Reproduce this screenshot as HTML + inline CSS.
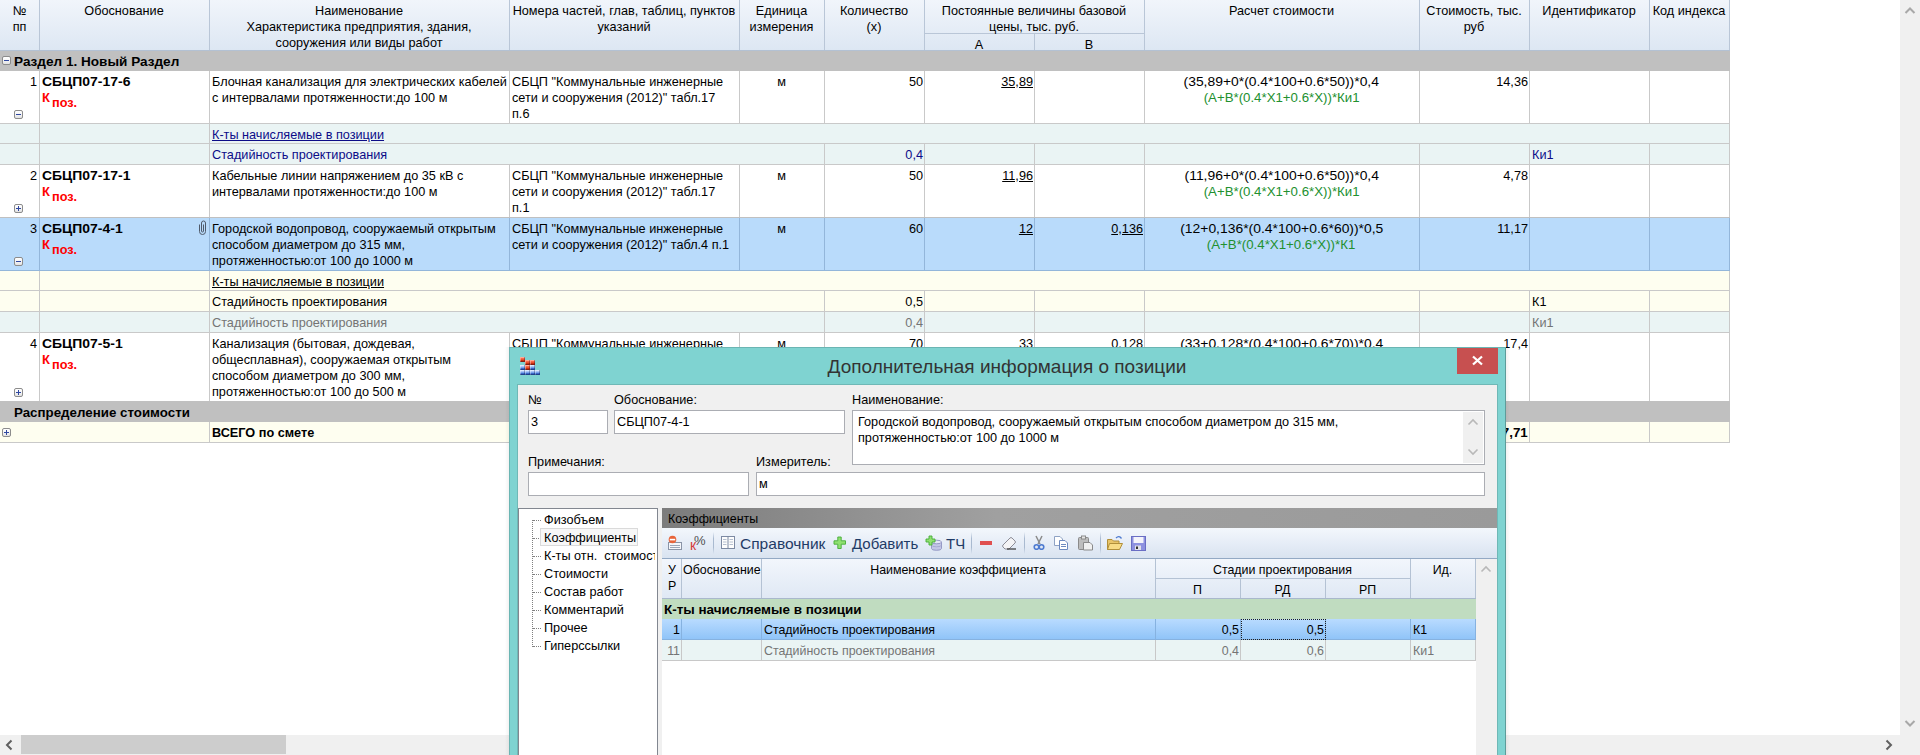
<!DOCTYPE html>
<html><head><meta charset="utf-8"><style>
html,body{margin:0;padding:0;}
body{width:1920px;height:755px;overflow:hidden;position:relative;background:#fff;font-family:"Liberation Sans",sans-serif;}
.t{position:absolute;white-space:pre;font-family:"Liberation Sans",sans-serif;}
.r{position:absolute;}
</style></head><body>
<div class="r" style="left:0px;top:0px;width:1730px;height:50px;background:linear-gradient(#f1f5fb,#dde7f3);"></div>
<div class="r" style="left:0px;top:50px;width:1730px;height:1px;background:#b3c1d3;"></div>
<div class="r" style="left:39px;top:0px;width:1px;height:50px;background:#b9c6d7;"></div>
<div class="r" style="left:209px;top:0px;width:1px;height:50px;background:#b9c6d7;"></div>
<div class="r" style="left:509px;top:0px;width:1px;height:50px;background:#b9c6d7;"></div>
<div class="r" style="left:739px;top:0px;width:1px;height:50px;background:#b9c6d7;"></div>
<div class="r" style="left:824px;top:0px;width:1px;height:50px;background:#b9c6d7;"></div>
<div class="r" style="left:924px;top:0px;width:1px;height:50px;background:#b9c6d7;"></div>
<div class="r" style="left:1034px;top:33px;width:1px;height:17px;background:#b9c6d7;"></div>
<div class="r" style="left:1144px;top:0px;width:1px;height:50px;background:#b9c6d7;"></div>
<div class="r" style="left:1419px;top:0px;width:1px;height:50px;background:#b9c6d7;"></div>
<div class="r" style="left:1529px;top:0px;width:1px;height:50px;background:#b9c6d7;"></div>
<div class="r" style="left:1649px;top:0px;width:1px;height:50px;background:#b9c6d7;"></div>
<div class="r" style="left:1729px;top:0px;width:1px;height:50px;background:#b9c6d7;"></div>
<div class="r" style="left:925px;top:33px;width:219px;height:1px;background:#b9c6d7;"></div>
<div class="t" style="top:2.60px;font-size:12.7px;font-weight:400;color:#000;line-height:16px;left:-980.5px;width:2000px;text-align:center;">№</div>
<div class="t" style="top:18.60px;font-size:12.7px;font-weight:400;color:#000;line-height:16px;left:-980.5px;width:2000px;text-align:center;">пп</div>
<div class="t" style="top:2.60px;font-size:12.7px;font-weight:400;color:#000;line-height:16px;left:-876.0px;width:2000px;text-align:center;">Обоснование</div>
<div class="t" style="top:2.60px;font-size:12.7px;font-weight:400;color:#000;line-height:16px;left:-641.0px;width:2000px;text-align:center;">Наименование</div>
<div class="t" style="top:18.60px;font-size:12.7px;font-weight:400;color:#000;line-height:16px;left:-641.0px;width:2000px;text-align:center;">Характеристика предприятия, здания,</div>
<div class="t" style="top:34.60px;font-size:12.7px;font-weight:400;color:#000;line-height:16px;left:-641.0px;width:2000px;text-align:center;">сооружения или виды работ</div>
<div class="t" style="top:2.60px;font-size:12.7px;font-weight:400;color:#000;line-height:16px;left:-376.0px;width:2000px;text-align:center;">Номера частей, глав, таблиц, пунктов</div>
<div class="t" style="top:18.60px;font-size:12.7px;font-weight:400;color:#000;line-height:16px;left:-376.0px;width:2000px;text-align:center;">указаний</div>
<div class="t" style="top:2.60px;font-size:12.7px;font-weight:400;color:#000;line-height:16px;left:-218.5px;width:2000px;text-align:center;">Единица</div>
<div class="t" style="top:18.60px;font-size:12.7px;font-weight:400;color:#000;line-height:16px;left:-218.5px;width:2000px;text-align:center;">измерения</div>
<div class="t" style="top:2.60px;font-size:12.7px;font-weight:400;color:#000;line-height:16px;left:-126.0px;width:2000px;text-align:center;">Количество</div>
<div class="t" style="top:18.60px;font-size:12.7px;font-weight:400;color:#000;line-height:16px;left:-126.0px;width:2000px;text-align:center;">(x)</div>
<div class="t" style="top:2.60px;font-size:12.7px;font-weight:400;color:#000;line-height:16px;left:34.0px;width:2000px;text-align:center;">Постоянные величины базовой</div>
<div class="t" style="top:18.60px;font-size:12.7px;font-weight:400;color:#000;line-height:16px;left:34.0px;width:2000px;text-align:center;">цены, тыс. руб.</div>
<div class="t" style="top:36.60px;font-size:12.7px;font-weight:400;color:#000;line-height:16px;left:-21px;width:2000px;text-align:center;">А</div>
<div class="t" style="top:36.60px;font-size:12.7px;font-weight:400;color:#000;line-height:16px;left:89px;width:2000px;text-align:center;">В</div>
<div class="t" style="top:2.60px;font-size:12.7px;font-weight:400;color:#000;line-height:16px;left:281.5px;width:2000px;text-align:center;">Расчет стоимости</div>
<div class="t" style="top:2.60px;font-size:12.7px;font-weight:400;color:#000;line-height:16px;left:474.0px;width:2000px;text-align:center;">Стоимость, тыс.</div>
<div class="t" style="top:18.60px;font-size:12.7px;font-weight:400;color:#000;line-height:16px;left:474.0px;width:2000px;text-align:center;">руб</div>
<div class="t" style="top:2.60px;font-size:12.7px;font-weight:400;color:#000;line-height:16px;left:589.0px;width:2000px;text-align:center;">Идентификатор</div>
<div class="t" style="top:2.60px;font-size:12.7px;font-weight:400;color:#000;line-height:16px;left:689.0px;width:2000px;text-align:center;">Код индекса</div>
<div class="r" style="left:0px;top:51px;width:1730px;height:20px;background:#c0c0c0;"></div>
<div class="r" style="left:2px;top:56px;width:7px;height:7px;border:1px solid #8c8c8c;border-radius:2px;background:linear-gradient(#ffffff,#f4f4f4 50%,#e2e2e2)"></div>
<div class="r" style="left:4px;top:60px;width:5px;height:1px;background:#3048a0;"></div>
<div class="t" style="top:53.60px;font-size:12.7px;font-weight:700;color:#000;line-height:16px;left:14px;"><span style="display:inline-block;transform:scaleX(1.07);transform-origin:left">Раздел 1. Новый Раздел</span></div>
<div class="r" style="left:0px;top:70px;width:1730px;height:1px;background:#c0c0c0;"></div>
<div class="r" style="left:0px;top:71px;width:1730px;height:52px;background:#ffffff;"></div>
<div class="r" style="left:39px;top:71px;width:1px;height:52px;background:#c9c9c9;"></div>
<div class="r" style="left:209px;top:71px;width:1px;height:52px;background:#c9c9c9;"></div>
<div class="r" style="left:509px;top:71px;width:1px;height:52px;background:#c9c9c9;"></div>
<div class="r" style="left:739px;top:71px;width:1px;height:52px;background:#c9c9c9;"></div>
<div class="r" style="left:824px;top:71px;width:1px;height:52px;background:#c9c9c9;"></div>
<div class="r" style="left:924px;top:71px;width:1px;height:52px;background:#c9c9c9;"></div>
<div class="r" style="left:1034px;top:71px;width:1px;height:52px;background:#c9c9c9;"></div>
<div class="r" style="left:1144px;top:71px;width:1px;height:52px;background:#c9c9c9;"></div>
<div class="r" style="left:1419px;top:71px;width:1px;height:52px;background:#c9c9c9;"></div>
<div class="r" style="left:1529px;top:71px;width:1px;height:52px;background:#c9c9c9;"></div>
<div class="r" style="left:1649px;top:71px;width:1px;height:52px;background:#c9c9c9;"></div>
<div class="r" style="left:1729px;top:71px;width:1px;height:52px;background:#c9c9c9;"></div>
<div class="t" style="top:73.60px;font-size:12.7px;font-weight:400;color:#000;line-height:16px;left:-1963px;width:2000px;text-align:right;">1</div>
<div class="t" style="top:73.60px;font-size:12.7px;font-weight:700;color:#000;line-height:16px;left:42px;"><span style="display:inline-block;transform:scaleX(1.1);transform-origin:left">СБЦП07-17-6</span></div>
<div class="t" style="top:89.50px;font-size:13px;font-weight:700;color:#ff0000;line-height:16px;left:42px;">К</div>
<div class="t" style="top:94.60px;font-size:12.7px;font-weight:700;color:#ff0000;line-height:16px;left:52px;">поз.</div>
<div class="r" style="left:14px;top:110px;width:7px;height:7px;border:1px solid #8c8c8c;border-radius:2px;background:linear-gradient(#ffffff,#f4f4f4 50%,#e2e2e2)"></div>
<div class="r" style="left:16px;top:114px;width:5px;height:1px;background:#3048a0;"></div>
<div class="t" style="top:73.60px;font-size:12.7px;font-weight:400;color:#000;line-height:16px;left:212px;">Блочная канализация для электрических кабелей</div>
<div class="t" style="top:89.60px;font-size:12.7px;font-weight:400;color:#000;line-height:16px;left:212px;">с интервалами протяженности:до 100 м</div>
<div class="t" style="top:73.60px;font-size:12.7px;font-weight:400;color:#000;line-height:16px;left:512px;">СБЦП &quot;Коммунальные инженерные</div>
<div class="t" style="top:89.60px;font-size:12.7px;font-weight:400;color:#000;line-height:16px;left:512px;">сети и сооружения (2012)&quot; табл.17</div>
<div class="t" style="top:105.60px;font-size:12.7px;font-weight:400;color:#000;line-height:16px;left:512px;">п.6</div>
<div class="t" style="top:73.60px;font-size:12.7px;font-weight:400;color:#000;line-height:16px;left:-218.5px;width:2000px;text-align:center;">м</div>
<div class="t" style="top:73.60px;font-size:12.7px;font-weight:400;color:#000;line-height:16px;left:-1077px;width:2000px;text-align:right;">50</div>
<div class="t" style="top:73.60px;font-size:12.7px;font-weight:400;color:#000;line-height:16px;left:-967px;width:2000px;text-align:right;text-decoration:underline;">35,89</div>
<div class="t" style="top:73.60px;font-size:12.7px;font-weight:400;color:#000;line-height:16px;left:281.5px;width:2000px;text-align:center;"><span style="display:inline-block;transform:scaleX(1.095);transform-origin:center">(35,89+0*(0.4*100+0.6*50))*0,4</span></div>
<div class="t" style="top:89.60px;font-size:12.7px;font-weight:400;color:#22902f;line-height:16px;left:281.5px;width:2000px;text-align:center;"><span style="display:inline-block;transform:scaleX(1.045);transform-origin:center">(A+B*(0.4*X1+0.6*X))*Ки1</span></div>
<div class="t" style="top:73.60px;font-size:12.7px;font-weight:400;color:#000;line-height:16px;left:-472px;width:2000px;text-align:right;">14,36</div>
<div class="r" style="left:0px;top:123px;width:1730px;height:1px;background:#c9c9c9;"></div>
<div class="r" style="left:0px;top:124px;width:1730px;height:19px;background:#eaf4f4;"></div>
<div class="r" style="left:39px;top:124px;width:1px;height:19px;background:#c9c9c9;"></div>
<div class="r" style="left:209px;top:124px;width:1px;height:19px;background:#c9c9c9;"></div>
<div class="r" style="left:1729px;top:124px;width:1px;height:19px;background:#c9c9c9;"></div>
<div class="t" style="top:126.60px;font-size:12.7px;font-weight:400;color:#0c0c88;line-height:16px;left:212px;text-decoration:underline;">К-ты начисляемые в позиции</div>
<div class="r" style="left:0px;top:143px;width:1730px;height:1px;background:#c9c9c9;"></div>
<div class="r" style="left:0px;top:144px;width:1730px;height:20px;background:#eaf4f4;"></div>
<div class="r" style="left:39px;top:144px;width:1px;height:20px;background:#c9c9c9;"></div>
<div class="r" style="left:209px;top:144px;width:1px;height:20px;background:#c9c9c9;"></div>
<div class="r" style="left:824px;top:144px;width:1px;height:20px;background:#c9c9c9;"></div>
<div class="r" style="left:924px;top:144px;width:1px;height:20px;background:#c9c9c9;"></div>
<div class="r" style="left:1034px;top:144px;width:1px;height:20px;background:#c9c9c9;"></div>
<div class="r" style="left:1144px;top:144px;width:1px;height:20px;background:#c9c9c9;"></div>
<div class="r" style="left:1419px;top:144px;width:1px;height:20px;background:#c9c9c9;"></div>
<div class="r" style="left:1529px;top:144px;width:1px;height:20px;background:#c9c9c9;"></div>
<div class="r" style="left:1649px;top:144px;width:1px;height:20px;background:#c9c9c9;"></div>
<div class="r" style="left:1729px;top:144px;width:1px;height:20px;background:#c9c9c9;"></div>
<div class="t" style="top:146.60px;font-size:12.7px;font-weight:400;color:#0c0c88;line-height:16px;left:212px;">Стадийность проектирования</div>
<div class="t" style="top:146.60px;font-size:12.7px;font-weight:400;color:#0c0c88;line-height:16px;left:-1077px;width:2000px;text-align:right;">0,4</div>
<div class="t" style="top:146.60px;font-size:12.7px;font-weight:400;color:#0c0c88;line-height:16px;left:1532px;">Ки1</div>
<div class="r" style="left:0px;top:164px;width:1730px;height:1px;background:#c9c9c9;"></div>
<div class="r" style="left:0px;top:165px;width:1730px;height:52px;background:#ffffff;"></div>
<div class="r" style="left:39px;top:165px;width:1px;height:52px;background:#c9c9c9;"></div>
<div class="r" style="left:209px;top:165px;width:1px;height:52px;background:#c9c9c9;"></div>
<div class="r" style="left:509px;top:165px;width:1px;height:52px;background:#c9c9c9;"></div>
<div class="r" style="left:739px;top:165px;width:1px;height:52px;background:#c9c9c9;"></div>
<div class="r" style="left:824px;top:165px;width:1px;height:52px;background:#c9c9c9;"></div>
<div class="r" style="left:924px;top:165px;width:1px;height:52px;background:#c9c9c9;"></div>
<div class="r" style="left:1034px;top:165px;width:1px;height:52px;background:#c9c9c9;"></div>
<div class="r" style="left:1144px;top:165px;width:1px;height:52px;background:#c9c9c9;"></div>
<div class="r" style="left:1419px;top:165px;width:1px;height:52px;background:#c9c9c9;"></div>
<div class="r" style="left:1529px;top:165px;width:1px;height:52px;background:#c9c9c9;"></div>
<div class="r" style="left:1649px;top:165px;width:1px;height:52px;background:#c9c9c9;"></div>
<div class="r" style="left:1729px;top:165px;width:1px;height:52px;background:#c9c9c9;"></div>
<div class="t" style="top:167.60px;font-size:12.7px;font-weight:400;color:#000;line-height:16px;left:-1963px;width:2000px;text-align:right;">2</div>
<div class="t" style="top:167.60px;font-size:12.7px;font-weight:700;color:#000;line-height:16px;left:42px;"><span style="display:inline-block;transform:scaleX(1.1);transform-origin:left">СБЦП07-17-1</span></div>
<div class="t" style="top:183.50px;font-size:13px;font-weight:700;color:#ff0000;line-height:16px;left:42px;">К</div>
<div class="t" style="top:188.60px;font-size:12.7px;font-weight:700;color:#ff0000;line-height:16px;left:52px;">поз.</div>
<div class="r" style="left:14px;top:204px;width:7px;height:7px;border:1px solid #8c8c8c;border-radius:2px;background:linear-gradient(#ffffff,#f4f4f4 50%,#e2e2e2)"></div>
<div class="r" style="left:16px;top:208px;width:5px;height:1px;background:#3048a0;"></div>
<div class="r" style="left:18px;top:206px;width:1px;height:5px;background:#3048a0;"></div>
<div class="t" style="top:167.60px;font-size:12.7px;font-weight:400;color:#000;line-height:16px;left:212px;">Кабельные линии напряжением до 35 кВ с</div>
<div class="t" style="top:183.60px;font-size:12.7px;font-weight:400;color:#000;line-height:16px;left:212px;">интервалами протяженности:до 100 м</div>
<div class="t" style="top:167.60px;font-size:12.7px;font-weight:400;color:#000;line-height:16px;left:512px;">СБЦП &quot;Коммунальные инженерные</div>
<div class="t" style="top:183.60px;font-size:12.7px;font-weight:400;color:#000;line-height:16px;left:512px;">сети и сооружения (2012)&quot; табл.17</div>
<div class="t" style="top:199.60px;font-size:12.7px;font-weight:400;color:#000;line-height:16px;left:512px;">п.1</div>
<div class="t" style="top:167.60px;font-size:12.7px;font-weight:400;color:#000;line-height:16px;left:-218.5px;width:2000px;text-align:center;">м</div>
<div class="t" style="top:167.60px;font-size:12.7px;font-weight:400;color:#000;line-height:16px;left:-1077px;width:2000px;text-align:right;">50</div>
<div class="t" style="top:167.60px;font-size:12.7px;font-weight:400;color:#000;line-height:16px;left:-967px;width:2000px;text-align:right;text-decoration:underline;">11,96</div>
<div class="t" style="top:167.60px;font-size:12.7px;font-weight:400;color:#000;line-height:16px;left:281.5px;width:2000px;text-align:center;"><span style="display:inline-block;transform:scaleX(1.095);transform-origin:center">(11,96+0*(0.4*100+0.6*50))*0,4</span></div>
<div class="t" style="top:183.60px;font-size:12.7px;font-weight:400;color:#22902f;line-height:16px;left:281.5px;width:2000px;text-align:center;"><span style="display:inline-block;transform:scaleX(1.045);transform-origin:center">(A+B*(0.4*X1+0.6*X))*Ки1</span></div>
<div class="t" style="top:167.60px;font-size:12.7px;font-weight:400;color:#000;line-height:16px;left:-472px;width:2000px;text-align:right;">4,78</div>
<div class="r" style="left:0px;top:217px;width:1730px;height:1px;background:#c0c0c0;"></div>
<div class="r" style="left:0px;top:218px;width:1730px;height:52px;background:#b9dbfb;"></div>
<div class="r" style="left:39px;top:218px;width:1px;height:52px;background:#93b6da;"></div>
<div class="r" style="left:209px;top:218px;width:1px;height:52px;background:#93b6da;"></div>
<div class="r" style="left:509px;top:218px;width:1px;height:52px;background:#93b6da;"></div>
<div class="r" style="left:739px;top:218px;width:1px;height:52px;background:#93b6da;"></div>
<div class="r" style="left:824px;top:218px;width:1px;height:52px;background:#93b6da;"></div>
<div class="r" style="left:924px;top:218px;width:1px;height:52px;background:#93b6da;"></div>
<div class="r" style="left:1034px;top:218px;width:1px;height:52px;background:#93b6da;"></div>
<div class="r" style="left:1144px;top:218px;width:1px;height:52px;background:#93b6da;"></div>
<div class="r" style="left:1419px;top:218px;width:1px;height:52px;background:#93b6da;"></div>
<div class="r" style="left:1529px;top:218px;width:1px;height:52px;background:#93b6da;"></div>
<div class="r" style="left:1649px;top:218px;width:1px;height:52px;background:#93b6da;"></div>
<div class="r" style="left:1729px;top:218px;width:1px;height:52px;background:#93b6da;"></div>
<div class="t" style="top:220.60px;font-size:12.7px;font-weight:400;color:#000;line-height:16px;left:-1963px;width:2000px;text-align:right;">3</div>
<div class="t" style="top:220.60px;font-size:12.7px;font-weight:700;color:#000;line-height:16px;left:42px;"><span style="display:inline-block;transform:scaleX(1.1);transform-origin:left">СБЦП07-4-1</span></div>
<div class="t" style="top:236.50px;font-size:13px;font-weight:700;color:#ff0000;line-height:16px;left:42px;">К</div>
<div class="t" style="top:241.60px;font-size:12.7px;font-weight:700;color:#ff0000;line-height:16px;left:52px;">поз.</div>
<div class="r" style="left:14px;top:257px;width:7px;height:7px;border:1px solid #8c8c8c;border-radius:2px;background:linear-gradient(#ffffff,#f4f4f4 50%,#e2e2e2)"></div>
<div class="r" style="left:16px;top:261px;width:5px;height:1px;background:#3048a0;"></div>
<div class="t" style="top:220.60px;font-size:12.7px;font-weight:400;color:#000;line-height:16px;left:212px;">Городской водопровод, сооружаемый открытым</div>
<div class="t" style="top:236.60px;font-size:12.7px;font-weight:400;color:#000;line-height:16px;left:212px;">способом диаметром до 315 мм,</div>
<div class="t" style="top:252.60px;font-size:12.7px;font-weight:400;color:#000;line-height:16px;left:212px;">протяженностью:от 100 до 1000 м</div>
<div class="t" style="top:220.60px;font-size:12.7px;font-weight:400;color:#000;line-height:16px;left:512px;">СБЦП &quot;Коммунальные инженерные</div>
<div class="t" style="top:236.60px;font-size:12.7px;font-weight:400;color:#000;line-height:16px;left:512px;">сети и сооружения (2012)&quot; табл.4 п.1</div>
<div class="t" style="top:220.60px;font-size:12.7px;font-weight:400;color:#000;line-height:16px;left:-218.5px;width:2000px;text-align:center;">м</div>
<div class="t" style="top:220.60px;font-size:12.7px;font-weight:400;color:#000;line-height:16px;left:-1077px;width:2000px;text-align:right;">60</div>
<div class="t" style="top:220.60px;font-size:12.7px;font-weight:400;color:#000;line-height:16px;left:-967px;width:2000px;text-align:right;text-decoration:underline;">12</div>
<div class="t" style="top:220.60px;font-size:12.7px;font-weight:400;color:#000;line-height:16px;left:-857px;width:2000px;text-align:right;text-decoration:underline;">0,136</div>
<div class="t" style="top:220.60px;font-size:12.7px;font-weight:400;color:#000;line-height:16px;left:281.5px;width:2000px;text-align:center;"><span style="display:inline-block;transform:scaleX(1.095);transform-origin:center">(12+0,136*(0.4*100+0.6*60))*0,5</span></div>
<div class="t" style="top:236.60px;font-size:12.7px;font-weight:400;color:#22902f;line-height:16px;left:281.5px;width:2000px;text-align:center;"><span style="display:inline-block;transform:scaleX(1.045);transform-origin:center">(A+B*(0.4*X1+0.6*X))*К1</span></div>
<div class="t" style="top:220.60px;font-size:12.7px;font-weight:400;color:#000;line-height:16px;left:-472px;width:2000px;text-align:right;">11,17</div>
<div class="r" style="left:0px;top:270px;width:1730px;height:1px;background:#93b6da;"></div>
<svg class="r" style="left:197px;top:219px" width="11" height="17" viewBox="0 0 11 17"><path d="M2.5 5.5 V12.5 A3 3 0 0 0 8.5 12.5 V4 A2 2 0 0 0 4.5 4 V12 A1 1 0 0 0 6.5 12 V5.5" fill="none" stroke="#4f5a6a" stroke-width="1"/></svg>
<div class="r" style="left:0px;top:271px;width:1730px;height:19px;background:#fefef0;"></div>
<div class="r" style="left:39px;top:271px;width:1px;height:19px;background:#c9c9c9;"></div>
<div class="r" style="left:209px;top:271px;width:1px;height:19px;background:#c9c9c9;"></div>
<div class="r" style="left:1729px;top:271px;width:1px;height:19px;background:#c9c9c9;"></div>
<div class="t" style="top:273.60px;font-size:12.7px;font-weight:400;color:#000;line-height:16px;left:212px;text-decoration:underline;">К-ты начисляемые в позиции</div>
<div class="r" style="left:0px;top:290px;width:1730px;height:1px;background:#c9c9c9;"></div>
<div class="r" style="left:0px;top:291px;width:1730px;height:20px;background:#fefef0;"></div>
<div class="r" style="left:39px;top:291px;width:1px;height:20px;background:#c9c9c9;"></div>
<div class="r" style="left:209px;top:291px;width:1px;height:20px;background:#c9c9c9;"></div>
<div class="r" style="left:824px;top:291px;width:1px;height:20px;background:#c9c9c9;"></div>
<div class="r" style="left:924px;top:291px;width:1px;height:20px;background:#c9c9c9;"></div>
<div class="r" style="left:1034px;top:291px;width:1px;height:20px;background:#c9c9c9;"></div>
<div class="r" style="left:1144px;top:291px;width:1px;height:20px;background:#c9c9c9;"></div>
<div class="r" style="left:1419px;top:291px;width:1px;height:20px;background:#c9c9c9;"></div>
<div class="r" style="left:1529px;top:291px;width:1px;height:20px;background:#c9c9c9;"></div>
<div class="r" style="left:1649px;top:291px;width:1px;height:20px;background:#c9c9c9;"></div>
<div class="r" style="left:1729px;top:291px;width:1px;height:20px;background:#c9c9c9;"></div>
<div class="t" style="top:293.60px;font-size:12.7px;font-weight:400;color:#000;line-height:16px;left:212px;">Стадийность проектирования</div>
<div class="t" style="top:293.60px;font-size:12.7px;font-weight:400;color:#000;line-height:16px;left:-1077px;width:2000px;text-align:right;">0,5</div>
<div class="t" style="top:293.60px;font-size:12.7px;font-weight:400;color:#000;line-height:16px;left:1532px;">К1</div>
<div class="r" style="left:0px;top:311px;width:1730px;height:1px;background:#c9c9c9;"></div>
<div class="r" style="left:0px;top:312px;width:1730px;height:20px;background:#eaf4f4;"></div>
<div class="r" style="left:39px;top:312px;width:1px;height:20px;background:#c9c9c9;"></div>
<div class="r" style="left:209px;top:312px;width:1px;height:20px;background:#c9c9c9;"></div>
<div class="r" style="left:824px;top:312px;width:1px;height:20px;background:#c9c9c9;"></div>
<div class="r" style="left:924px;top:312px;width:1px;height:20px;background:#c9c9c9;"></div>
<div class="r" style="left:1034px;top:312px;width:1px;height:20px;background:#c9c9c9;"></div>
<div class="r" style="left:1144px;top:312px;width:1px;height:20px;background:#c9c9c9;"></div>
<div class="r" style="left:1419px;top:312px;width:1px;height:20px;background:#c9c9c9;"></div>
<div class="r" style="left:1529px;top:312px;width:1px;height:20px;background:#c9c9c9;"></div>
<div class="r" style="left:1649px;top:312px;width:1px;height:20px;background:#c9c9c9;"></div>
<div class="r" style="left:1729px;top:312px;width:1px;height:20px;background:#c9c9c9;"></div>
<div class="t" style="top:314.60px;font-size:12.7px;font-weight:400;color:#747474;line-height:16px;left:212px;">Стадийность проектирования</div>
<div class="t" style="top:314.60px;font-size:12.7px;font-weight:400;color:#747474;line-height:16px;left:-1077px;width:2000px;text-align:right;">0,4</div>
<div class="t" style="top:314.60px;font-size:12.7px;font-weight:400;color:#747474;line-height:16px;left:1532px;">Ки1</div>
<div class="r" style="left:0px;top:332px;width:1730px;height:1px;background:#c9c9c9;"></div>
<div class="r" style="left:0px;top:333px;width:1730px;height:68px;background:#ffffff;"></div>
<div class="r" style="left:39px;top:333px;width:1px;height:68px;background:#c9c9c9;"></div>
<div class="r" style="left:209px;top:333px;width:1px;height:68px;background:#c9c9c9;"></div>
<div class="r" style="left:509px;top:333px;width:1px;height:68px;background:#c9c9c9;"></div>
<div class="r" style="left:739px;top:333px;width:1px;height:68px;background:#c9c9c9;"></div>
<div class="r" style="left:824px;top:333px;width:1px;height:68px;background:#c9c9c9;"></div>
<div class="r" style="left:924px;top:333px;width:1px;height:68px;background:#c9c9c9;"></div>
<div class="r" style="left:1034px;top:333px;width:1px;height:68px;background:#c9c9c9;"></div>
<div class="r" style="left:1144px;top:333px;width:1px;height:68px;background:#c9c9c9;"></div>
<div class="r" style="left:1419px;top:333px;width:1px;height:68px;background:#c9c9c9;"></div>
<div class="r" style="left:1529px;top:333px;width:1px;height:68px;background:#c9c9c9;"></div>
<div class="r" style="left:1649px;top:333px;width:1px;height:68px;background:#c9c9c9;"></div>
<div class="r" style="left:1729px;top:333px;width:1px;height:68px;background:#c9c9c9;"></div>
<div class="t" style="top:335.60px;font-size:12.7px;font-weight:400;color:#000;line-height:16px;left:-1963px;width:2000px;text-align:right;">4</div>
<div class="t" style="top:335.60px;font-size:12.7px;font-weight:700;color:#000;line-height:16px;left:42px;"><span style="display:inline-block;transform:scaleX(1.1);transform-origin:left">СБЦП07-5-1</span></div>
<div class="t" style="top:351.50px;font-size:13px;font-weight:700;color:#ff0000;line-height:16px;left:42px;">К</div>
<div class="t" style="top:356.60px;font-size:12.7px;font-weight:700;color:#ff0000;line-height:16px;left:52px;">поз.</div>
<div class="r" style="left:14px;top:388px;width:7px;height:7px;border:1px solid #8c8c8c;border-radius:2px;background:linear-gradient(#ffffff,#f4f4f4 50%,#e2e2e2)"></div>
<div class="r" style="left:16px;top:392px;width:5px;height:1px;background:#3048a0;"></div>
<div class="r" style="left:18px;top:390px;width:1px;height:5px;background:#3048a0;"></div>
<div class="t" style="top:335.60px;font-size:12.7px;font-weight:400;color:#000;line-height:16px;left:212px;">Канализация (бытовая, дождевая,</div>
<div class="t" style="top:351.60px;font-size:12.7px;font-weight:400;color:#000;line-height:16px;left:212px;">общесплавная), сооружаемая открытым</div>
<div class="t" style="top:367.60px;font-size:12.7px;font-weight:400;color:#000;line-height:16px;left:212px;">способом диаметром до 300 мм,</div>
<div class="t" style="top:383.60px;font-size:12.7px;font-weight:400;color:#000;line-height:16px;left:212px;">протяженностью:от 100 до 500 м</div>
<div class="t" style="top:335.60px;font-size:12.7px;font-weight:400;color:#000;line-height:16px;left:512px;">СБЦП &quot;Коммунальные инженерные</div>
<div class="t" style="top:351.60px;font-size:12.7px;font-weight:400;color:#000;line-height:16px;left:512px;">сети и сооружения (2012)&quot; табл.5</div>
<div class="t" style="top:367.60px;font-size:12.7px;font-weight:400;color:#000;line-height:16px;left:512px;">п.1</div>
<div class="t" style="top:335.60px;font-size:12.7px;font-weight:400;color:#000;line-height:16px;left:-218.5px;width:2000px;text-align:center;">м</div>
<div class="t" style="top:335.60px;font-size:12.7px;font-weight:400;color:#000;line-height:16px;left:-1077px;width:2000px;text-align:right;">70</div>
<div class="t" style="top:335.60px;font-size:12.7px;font-weight:400;color:#000;line-height:16px;left:-967px;width:2000px;text-align:right;text-decoration:underline;">33</div>
<div class="t" style="top:335.60px;font-size:12.7px;font-weight:400;color:#000;line-height:16px;left:-857px;width:2000px;text-align:right;text-decoration:underline;">0,128</div>
<div class="t" style="top:335.60px;font-size:12.7px;font-weight:400;color:#000;line-height:16px;left:281.5px;width:2000px;text-align:center;"><span style="display:inline-block;transform:scaleX(1.095);transform-origin:center">(33+0,128*(0.4*100+0.6*70))*0,4</span></div>
<div class="t" style="top:351.60px;font-size:12.7px;font-weight:400;color:#22902f;line-height:16px;left:281.5px;width:2000px;text-align:center;"><span style="display:inline-block;transform:scaleX(1.045);transform-origin:center">(A+B*(0.4*X1+0.6*X))*Ки1</span></div>
<div class="t" style="top:335.60px;font-size:12.7px;font-weight:400;color:#000;line-height:16px;left:-472px;width:2000px;text-align:right;">17,4</div>
<div class="r" style="left:0px;top:401px;width:1730px;height:21px;background:#c0c0c0;"></div>
<div class="t" style="top:404.60px;font-size:12.7px;font-weight:700;color:#000;line-height:16px;left:14px;"><span style="display:inline-block;transform:scaleX(1.05);transform-origin:left">Распределение стоимости</span></div>
<div class="r" style="left:0px;top:422px;width:1730px;height:20px;background:#fefef0;"></div>
<div class="r" style="left:209px;top:422px;width:1px;height:20px;background:#c9c9c9;"></div>
<div class="r" style="left:1419px;top:422px;width:1px;height:20px;background:#c9c9c9;"></div>
<div class="r" style="left:1529px;top:422px;width:1px;height:20px;background:#c9c9c9;"></div>
<div class="r" style="left:1649px;top:422px;width:1px;height:20px;background:#c9c9c9;"></div>
<div class="r" style="left:1729px;top:422px;width:1px;height:20px;background:#c9c9c9;"></div>
<div class="r" style="left:2px;top:428px;width:7px;height:7px;border:1px solid #8c8c8c;border-radius:2px;background:linear-gradient(#ffffff,#f4f4f4 50%,#e2e2e2)"></div>
<div class="r" style="left:4px;top:432px;width:5px;height:1px;background:#3048a0;"></div>
<div class="r" style="left:6px;top:430px;width:1px;height:5px;background:#3048a0;"></div>
<div class="t" style="top:424.60px;font-size:12.7px;font-weight:700;color:#000;line-height:16px;left:212px;"><span style="display:inline-block;transform:scaleX(1.0);transform-origin:left">ВСЕГО по смете</span></div>
<div class="t" style="top:424.60px;font-size:12.7px;font-weight:700;color:#000;line-height:16px;left:-472px;width:2000px;text-align:right;"><span style="display:inline-block;transform:scaleX(1.05);transform-origin:right">47,71</span></div>
<div class="r" style="left:0px;top:442px;width:1730px;height:1px;background:#c9c9c9;"></div>
<div class="r" style="left:1900px;top:0px;width:20px;height:755px;background:#f0f0f0;"></div>
<div class="r" style="left:0px;top:735px;width:1900px;height:20px;background:#f0f0f0;"></div>
<div class="r" style="left:21px;top:735px;width:265px;height:19px;background:#cdcdcd;"></div>
<svg class="r" style="left:1904px;top:5px" width="12" height="10" viewBox="0 0 12 10"><path d="M1.5 8 L6 3.5 L10.5 8" fill="none" stroke="#a8a8a8" stroke-width="2"/></svg>
<svg class="r" style="left:1904px;top:719px" width="12" height="10" viewBox="0 0 12 10"><path d="M1.5 2 L6 6.5 L10.5 2" fill="none" stroke="#a8a8a8" stroke-width="2"/></svg>
<svg class="r" style="left:4px;top:739px" width="10" height="12" viewBox="0 0 10 12"><path d="M7.5 1.5 L3 6 L7.5 10.5" fill="none" stroke="#606060" stroke-width="2"/></svg>
<svg class="r" style="left:1884px;top:739px" width="10" height="12" viewBox="0 0 10 12"><path d="M2.5 1.5 L7 6 L2.5 10.5" fill="none" stroke="#606060" stroke-width="2"/></svg>
<div class="r" style="left:505px;top:347px;width:4px;height:408px;background:linear-gradient(90deg,rgba(0,0,0,0),rgba(0,0,0,0.05));"></div>
<div class="r" style="left:1506px;top:347px;width:4px;height:408px;background:linear-gradient(90deg,rgba(0,0,0,0.05),rgba(0,0,0,0));"></div>
<div class="r" style="left:509px;top:347px;width:997px;height:408px;background:#7fd3d1;box-shadow:inset 1px 1px 0 #6bb5b3, inset -1px 0 0 #5d9c9a;"></div>
<div class="r" style="left:520px;top:357px;width:5px;height:5px;background:linear-gradient(#ff8a6a,#f25a3a 45%,#c8300f 70%,#b02508);box-shadow:inset -1px -1px 0 rgba(0,0,40,0.28), inset 1px 1px 0 rgba(255,255,255,0.35);"></div>
<div class="r" style="left:525px;top:360px;width:5px;height:5px;background:linear-gradient(#ff8a6a,#f25a3a 45%,#c8300f 70%,#b02508);box-shadow:inset -1px -1px 0 rgba(0,0,40,0.28), inset 1px 1px 0 rgba(255,255,255,0.35);"></div>
<div class="r" style="left:530px;top:360px;width:5px;height:5px;background:linear-gradient(#ff8a6a,#f25a3a 45%,#c8300f 70%,#b02508);box-shadow:inset -1px -1px 0 rgba(0,0,40,0.28), inset 1px 1px 0 rgba(255,255,255,0.35);"></div>
<div class="r" style="left:520px;top:365px;width:5px;height:5px;background:linear-gradient(#dbe8ff,#8fb4f5 45%,#3f6fcf 65%,#2a52a8);box-shadow:inset -1px -1px 0 rgba(0,0,40,0.28), inset 1px 1px 0 rgba(255,255,255,0.35);"></div>
<div class="r" style="left:525px;top:365px;width:5px;height:5px;background:linear-gradient(#ff8a6a,#f25a3a 45%,#c8300f 70%,#b02508);box-shadow:inset -1px -1px 0 rgba(0,0,40,0.28), inset 1px 1px 0 rgba(255,255,255,0.35);"></div>
<div class="r" style="left:530px;top:365px;width:5px;height:5px;background:linear-gradient(#dbe8ff,#8fb4f5 45%,#3f6fcf 65%,#2a52a8);box-shadow:inset -1px -1px 0 rgba(0,0,40,0.28), inset 1px 1px 0 rgba(255,255,255,0.35);"></div>
<div class="r" style="left:520px;top:370px;width:5px;height:5px;background:linear-gradient(#dbe8ff,#8fb4f5 45%,#3f6fcf 65%,#2a52a8);box-shadow:inset -1px -1px 0 rgba(0,0,40,0.28), inset 1px 1px 0 rgba(255,255,255,0.35);"></div>
<div class="r" style="left:525px;top:370px;width:5px;height:5px;background:linear-gradient(#dbe8ff,#8fb4f5 45%,#3f6fcf 65%,#2a52a8);box-shadow:inset -1px -1px 0 rgba(0,0,40,0.28), inset 1px 1px 0 rgba(255,255,255,0.35);"></div>
<div class="r" style="left:530px;top:370px;width:5px;height:5px;background:linear-gradient(#dbe8ff,#8fb4f5 45%,#3f6fcf 65%,#2a52a8);box-shadow:inset -1px -1px 0 rgba(0,0,40,0.28), inset 1px 1px 0 rgba(255,255,255,0.35);"></div>
<div class="r" style="left:535px;top:370px;width:5px;height:5px;background:linear-gradient(#dbe8ff,#8fb4f5 45%,#3f6fcf 65%,#2a52a8);box-shadow:inset -1px -1px 0 rgba(0,0,40,0.28), inset 1px 1px 0 rgba(255,255,255,0.35);"></div>
<div class="t" style="top:359.42px;font-size:19px;font-weight:400;color:#333333;line-height:16px;left:7px;width:2000px;text-align:center;">Дополнительная информация о позиции</div>
<div class="r" style="left:1457px;top:348px;width:41px;height:26px;background:#c75050;"></div>
<svg class="r" style="left:1471px;top:355px" width="13" height="11" viewBox="0 0 13 11"><path d="M2 1.5 L11 9.5 M11 1.5 L2 9.5" stroke="#ffffff" stroke-width="2.3"/></svg>
<div class="r" style="left:517px;top:384px;width:981px;height:371px;background:#6fb8b6;"></div>
<div class="r" style="left:518px;top:385px;width:979px;height:370px;background:#f0f0f0;"></div>
<div class="t" style="top:391.60px;font-size:12.7px;font-weight:400;color:#000;line-height:16px;left:528px;">№</div>
<div class="t" style="top:391.60px;font-size:12.7px;font-weight:400;color:#000;line-height:16px;left:614px;">Обоснование:</div>
<div class="t" style="top:391.60px;font-size:12.7px;font-weight:400;color:#000;line-height:16px;left:852px;">Наименование:</div>
<div class="r" style="left:528px;top:410px;width:78px;height:22px;background:#fff;border:1px solid #abadb3"></div>
<div class="t" style="top:413.60px;font-size:12.7px;font-weight:400;color:#000;line-height:16px;left:531px;">3</div>
<div class="r" style="left:614px;top:410px;width:229px;height:22px;background:#fff;border:1px solid #abadb3"></div>
<div class="t" style="top:413.60px;font-size:12.7px;font-weight:400;color:#000;line-height:16px;left:617px;">СБЦП07-4-1</div>
<div class="r" style="left:852px;top:410px;width:631px;height:53px;background:#fff;border:1px solid #abadb3"></div>
<div class="r" style="left:1463px;top:412px;width:20px;height:51px;background:#f0f0f0;"></div>
<svg class="r" style="left:1467px;top:417px" width="12" height="10" viewBox="0 0 12 10"><path d="M1.5 7.5 L6 3 L10.5 7.5" fill="none" stroke="#b8b8b8" stroke-width="1.6"/></svg>
<svg class="r" style="left:1467px;top:447px" width="12" height="10" viewBox="0 0 12 10"><path d="M1.5 2.5 L6 7 L10.5 2.5" fill="none" stroke="#b8b8b8" stroke-width="1.6"/></svg>
<div class="t" style="top:413.60px;font-size:12.7px;font-weight:400;color:#000;line-height:16px;left:858px;">Городской водопровод, сооружаемый открытым способом диаметром до 315 мм,</div>
<div class="t" style="top:429.60px;font-size:12.7px;font-weight:400;color:#000;line-height:16px;left:858px;">протяженностью:от 100 до 1000 м</div>
<div class="t" style="top:453.60px;font-size:12.7px;font-weight:400;color:#000;line-height:16px;left:528px;">Примечания:</div>
<div class="t" style="top:453.60px;font-size:12.7px;font-weight:400;color:#000;line-height:16px;left:756px;">Измеритель:</div>
<div class="r" style="left:528px;top:472px;width:219px;height:22px;background:#fff;border:1px solid #abadb3"></div>
<div class="r" style="left:756px;top:472px;width:727px;height:22px;background:#fff;border:1px solid #abadb3"></div>
<div class="t" style="top:475.60px;font-size:12.7px;font-weight:400;color:#000;line-height:16px;left:759px;">м</div>
<div class="r" style="left:518px;top:508px;width:138px;height:260px;background:#fff;border:1px solid #828790"></div>
<div class="r" style="left:532px;top:520px;width:0;height:127px;border-left:1px dotted #808080"></div>
<div class="r" style="left:533px;top:520px;width:8px;height:0;border-top:1px dotted #808080"></div>
<div class="r" style="left:533px;top:538px;width:8px;height:0;border-top:1px dotted #808080"></div>
<div class="r" style="left:533px;top:556px;width:8px;height:0;border-top:1px dotted #808080"></div>
<div class="r" style="left:533px;top:574px;width:8px;height:0;border-top:1px dotted #808080"></div>
<div class="r" style="left:533px;top:592px;width:8px;height:0;border-top:1px dotted #808080"></div>
<div class="r" style="left:533px;top:610px;width:8px;height:0;border-top:1px dotted #808080"></div>
<div class="r" style="left:533px;top:628px;width:8px;height:0;border-top:1px dotted #808080"></div>
<div class="r" style="left:533px;top:646px;width:8px;height:0;border-top:1px dotted #808080"></div>
<div class="r" style="left:540px;top:528px;width:96px;height:16px;background:#f7f7f7;border:1px solid #dadada"></div>
<div class="t" style="top:511.60px;font-size:12.7px;font-weight:400;color:#000;line-height:16px;left:544px;">Физобъем</div>
<div class="t" style="top:529.60px;font-size:12.7px;font-weight:400;color:#000;line-height:16px;left:544px;">Коэффициенты</div>
<div class="t" style="top:547.60px;font-size:12.7px;font-weight:400;color:#000;line-height:16px;left:544px;overflow:hidden;width:111px;">К-ты отн.  стоимость</div>
<div class="t" style="top:565.60px;font-size:12.7px;font-weight:400;color:#000;line-height:16px;left:544px;">Стоимости</div>
<div class="t" style="top:583.60px;font-size:12.7px;font-weight:400;color:#000;line-height:16px;left:544px;">Состав работ</div>
<div class="t" style="top:601.60px;font-size:12.7px;font-weight:400;color:#000;line-height:16px;left:544px;">Комментарий</div>
<div class="t" style="top:619.60px;font-size:12.7px;font-weight:400;color:#000;line-height:16px;left:544px;">Прочее</div>
<div class="t" style="top:637.60px;font-size:12.7px;font-weight:400;color:#000;line-height:16px;left:544px;">Гиперссылки</div>
<div class="r" style="left:662px;top:508px;width:835px;height:20px;background:linear-gradient(90deg,#7c7c7c,#a0a0a0 40%,#9a9a9a);"></div>
<div class="t" style="top:510.70px;font-size:12.4px;font-weight:400;color:#000;line-height:16px;left:668px;">Коэффициенты</div>
<div class="r" style="left:662px;top:528px;width:835px;height:30px;background:linear-gradient(#f3f7fc,#e6edf7 50%,#d9e3f0);"></div>
<div class="r" style="left:662px;top:558px;width:835px;height:1px;background:#93a9c4;"></div>
<div class="r" style="left:713px;top:532px;width:1px;height:22px;background:linear-gradient(rgba(160,180,205,0),#a9bad0 30%,#a9bad0 70%,rgba(160,180,205,0));"></div>
<div class="r" style="left:971px;top:532px;width:1px;height:22px;background:linear-gradient(rgba(160,180,205,0),#a9bad0 30%,#a9bad0 70%,rgba(160,180,205,0));"></div>
<div class="r" style="left:1024px;top:532px;width:1px;height:22px;background:linear-gradient(rgba(160,180,205,0),#a9bad0 30%,#a9bad0 70%,rgba(160,180,205,0));"></div>
<div class="r" style="left:1100px;top:532px;width:1px;height:22px;background:linear-gradient(rgba(160,180,205,0),#a9bad0 30%,#a9bad0 70%,rgba(160,180,205,0));"></div>
<svg class="r" style="left:667px;top:535px" width="16" height="16" viewBox="0 0 16 16">
<rect x="1.5" y="7.5" width="13" height="7" fill="#f4f6fa" stroke="#8a94a6"/><line x1="3" y1="10.5" x2="13" y2="10.5" stroke="#9aa6b8"/><line x1="3" y1="12.5" x2="13" y2="12.5" stroke="#9aa6b8"/>
<circle cx="5.5" cy="4.5" r="3.8" fill="#e8643a"/><rect x="2.8" y="3.8" width="5.4" height="1.6" fill="#fff"/></svg>
<div class="t" style="top:537.15px;font-size:14px;font-weight:400;color:#d43a3a;line-height:16px;left:690px;">к</div>
<div class="t" style="top:532.50px;font-size:13px;font-weight:400;color:#505050;line-height:16px;left:694px;">%</div>
<svg class="r" style="left:720px;top:535px" width="16" height="15" viewBox="0 0 16 15">
<rect x="1.5" y="1.5" width="13" height="12" fill="#fdfdfd" stroke="#7d8aa3"/><line x1="8" y1="1.5" x2="8" y2="13.5" stroke="#7d8aa3"/>
<line x1="3" y1="4.5" x2="6.5" y2="4.5" stroke="#b5bfcf"/><line x1="3" y1="7" x2="6.5" y2="7" stroke="#b5bfcf"/><line x1="3" y1="9.5" x2="6.5" y2="9.5" stroke="#b5bfcf"/>
<line x1="9.5" y1="4.5" x2="13" y2="4.5" stroke="#b5bfcf"/><line x1="9.5" y1="7" x2="13" y2="7" stroke="#b5bfcf"/><line x1="9.5" y1="9.5" x2="13" y2="9.5" stroke="#b5bfcf"/></svg>
<div class="t" style="top:535.80px;font-size:15px;font-weight:400;color:#1f3b66;line-height:16px;left:740px;"><span style="display:inline-block;transform:scaleX(1.035);transform-origin:left">Справочник</span></div>
<svg class="r" style="left:833px;top:536px" width="14" height="14" viewBox="0 0 14 14">
<path d="M4.8 1 H8.2 V4.8 H12.5 V8.2 H8.2 V12.5 H4.8 V8.2 H1 V4.8 H4.8 Z" fill="#8fe070" stroke="#45ad35" stroke-width="0.9"/></svg>
<div class="t" style="top:535.80px;font-size:15px;font-weight:400;color:#1f3b66;line-height:16px;left:852px;">Добавить</div>
<svg class="r" style="left:925px;top:535px" width="18" height="16" viewBox="0 0 18 16">
<path d="M6.5 7 V13.5 A5 1.8 0 0 0 16.5 13.5 V7" fill="#c3c6e6" stroke="#8d92bf" stroke-width="0.9"/>
<ellipse cx="11.5" cy="7" rx="5" ry="1.8" fill="#e4e6f6" stroke="#8d92bf" stroke-width="0.9"/>
<path d="M6.5 10 A5 1.8 0 0 0 16.5 10" fill="none" stroke="#9ea2cc" stroke-width="0.8"/>
<path d="M4 1 H7 V4 H10 V7 H7 V10 H4 V7 H1 V4 H4 Z" fill="#8fe070" stroke="#45ad35" stroke-width="0.9"/></svg>
<div class="t" style="top:535.80px;font-size:15px;font-weight:400;color:#1f3b66;line-height:16px;left:946px;">ТЧ</div>
<div class="r" style="left:980px;top:541px;width:12px;height:4px;background:#e05050;"></div>
<svg class="r" style="left:1001px;top:536px" width="16" height="14" viewBox="0 0 16 14">
<path d="M2 9 L9 2 Q10 1 11 2 L14 5 Q15 6 14 7 L8 13 H4 L2 11 Q1 10 2 9 Z" fill="#f4f4f6" stroke="#8c8c96"/><line x1="6" y1="13" x2="15" y2="13" stroke="#333" stroke-width="1.2"/></svg>
<svg class="r" style="left:1033px;top:535px" width="12" height="15" viewBox="0 0 12 15">
<path d="M3 1 L7 9 M9 1 L5 9" stroke="#8a8a8a" stroke-width="1.5"/><circle cx="3.5" cy="12" r="2.3" fill="none" stroke="#4d7ad0" stroke-width="1.6"/><circle cx="8.5" cy="12" r="2.3" fill="none" stroke="#4d7ad0" stroke-width="1.6"/></svg>
<svg class="r" style="left:1053px;top:535px" width="16" height="15" viewBox="0 0 16 15">
<path d="M1.5 1.5 H7 L9.5 4 V10.5 H1.5 Z" fill="#fff" stroke="#8ea2c4"/><path d="M6.5 5.5 H12 L14.5 8 V14.5 H6.5 Z" fill="#fff" stroke="#6d8ac0"/>
<line x1="8" y1="9.5" x2="13" y2="9.5" stroke="#6d8ac0"/><line x1="8" y1="11.5" x2="13" y2="11.5" stroke="#6d8ac0"/></svg>
<svg class="r" style="left:1077px;top:535px" width="17" height="16" viewBox="0 0 17 16">
<rect x="1.5" y="2.5" width="10" height="12" rx="1" fill="#bdbdbd" stroke="#8a8a8a"/><rect x="4.5" y="1" width="4" height="3" fill="#e6e6e6" stroke="#8a8a8a"/>
<path d="M6.5 7.5 H13 L15.5 10 V15 H6.5 Z" fill="#f0f0f0" stroke="#8a8a8a"/></svg>
<svg class="r" style="left:1106px;top:535px" width="18" height="16" viewBox="0 0 18 16">
<path d="M1.5 4.5 H6 L7.5 6 H13 V14.5 H1.5 Z" fill="#e9c56a" stroke="#b18f3a"/><path d="M3.5 8.5 H16.5 L13.5 14.5 H1.5 Z" fill="#f8dc86" stroke="#b18f3a"/>
<path d="M10 3 Q13 0 15.5 3.5" fill="none" stroke="#4d7ad0" stroke-width="1.3"/></svg>
<svg class="r" style="left:1131px;top:536px" width="15" height="15" viewBox="0 0 15 15">
<rect x="0.5" y="0.5" width="14" height="14" fill="#8d91e0" stroke="#6a6ec4"/><rect x="2.5" y="1" width="10" height="6" fill="#f4f4fb"/><rect x="4" y="9.5" width="6" height="4.5" fill="#e0e0ea"/><rect x="5" y="10.5" width="2" height="2.5" fill="#333"/></svg>
<div class="r" style="left:662px;top:559px;width:814px;height:40px;background:linear-gradient(#f2f6fc,#dfe8f4);"></div>
<div class="r" style="left:681px;top:559px;width:1px;height:40px;background:#b4c2d4;"></div>
<div class="r" style="left:761px;top:559px;width:1px;height:40px;background:#b4c2d4;"></div>
<div class="r" style="left:1155px;top:559px;width:1px;height:40px;background:#b4c2d4;"></div>
<div class="r" style="left:1410px;top:559px;width:1px;height:40px;background:#b4c2d4;"></div>
<div class="r" style="left:1240px;top:578px;width:1px;height:21px;background:#b4c2d4;"></div>
<div class="r" style="left:1325px;top:578px;width:1px;height:21px;background:#b4c2d4;"></div>
<div class="r" style="left:1156px;top:578px;width:254px;height:1px;background:#b4c2d4;"></div>
<div class="r" style="left:1475px;top:559px;width:1px;height:40px;background:#b4c2d4;"></div>
<div class="r" style="left:662px;top:598px;width:814px;height:1px;background:#a9b8cc;"></div>
<div class="t" style="top:561.70px;font-size:12.4px;font-weight:400;color:#000;line-height:16px;left:668px;">У</div>
<div class="t" style="top:577.70px;font-size:12.4px;font-weight:400;color:#000;line-height:16px;left:668px;">Р</div>
<div class="t" style="top:561.70px;font-size:12.4px;font-weight:400;color:#000;line-height:16px;left:683px;">Обоснование</div>
<div class="t" style="top:561.70px;font-size:12.4px;font-weight:400;color:#000;line-height:16px;left:-42px;width:2000px;text-align:center;">Наименование коэффициента</div>
<div class="t" style="top:561.70px;font-size:12.4px;font-weight:400;color:#000;line-height:16px;left:282.5px;width:2000px;text-align:center;">Стадии проектирования</div>
<div class="t" style="top:581.70px;font-size:12.4px;font-weight:400;color:#000;line-height:16px;left:197.5px;width:2000px;text-align:center;">П</div>
<div class="t" style="top:581.70px;font-size:12.4px;font-weight:400;color:#000;line-height:16px;left:282.5px;width:2000px;text-align:center;">РД</div>
<div class="t" style="top:581.70px;font-size:12.4px;font-weight:400;color:#000;line-height:16px;left:367.5px;width:2000px;text-align:center;">РП</div>
<div class="t" style="top:561.70px;font-size:12.4px;font-weight:400;color:#000;line-height:16px;left:442.5px;width:2000px;text-align:center;">Ид.</div>
<div class="r" style="left:662px;top:599px;width:814px;height:20px;background:#c0dcc0;"></div>
<div class="t" style="top:601.60px;font-size:12.7px;font-weight:700;color:#000;line-height:16px;left:664px;"><span style="display:inline-block;transform:scaleX(1.06);transform-origin:left">К-ты начисляемые в позиции</span></div>
<div class="r" style="left:662px;top:619px;width:814px;height:21px;background:linear-gradient(#b9dbff,#8ec3f8);"></div>
<div class="r" style="left:681px;top:619px;width:1px;height:21px;background:#86b2e0;"></div>
<div class="r" style="left:761px;top:619px;width:1px;height:21px;background:#86b2e0;"></div>
<div class="r" style="left:1155px;top:619px;width:1px;height:21px;background:#86b2e0;"></div>
<div class="r" style="left:1240px;top:619px;width:1px;height:21px;background:#86b2e0;"></div>
<div class="r" style="left:1325px;top:619px;width:1px;height:21px;background:#86b2e0;"></div>
<div class="r" style="left:1410px;top:619px;width:1px;height:21px;background:#86b2e0;"></div>
<div class="r" style="left:1475px;top:619px;width:1px;height:21px;background:#86b2e0;"></div>
<div class="r" style="left:662px;top:639px;width:814px;height:1px;background:#86b2e0;"></div>
<div class="t" style="top:621.70px;font-size:12.4px;font-weight:400;color:#000;line-height:16px;left:-1320px;width:2000px;text-align:right;">1</div>
<div class="t" style="top:621.70px;font-size:12.4px;font-weight:400;color:#000;line-height:16px;left:764px;">Стадийность проектирования</div>
<div class="t" style="top:621.70px;font-size:12.4px;font-weight:400;color:#000;line-height:16px;left:-761px;width:2000px;text-align:right;">0,5</div>
<div class="r" style="left:1241px;top:619px;width:83px;height:19px;border:1px dotted #202020"></div>
<div class="t" style="top:621.70px;font-size:12.4px;font-weight:400;color:#000;line-height:16px;left:-676px;width:2000px;text-align:right;">0,5</div>
<div class="t" style="top:621.70px;font-size:12.4px;font-weight:400;color:#000;line-height:16px;left:1413px;">К1</div>
<div class="r" style="left:662px;top:640px;width:814px;height:20px;background:#eaf4f4;"></div>
<div class="r" style="left:681px;top:640px;width:1px;height:20px;background:#c8c8c8;"></div>
<div class="r" style="left:761px;top:640px;width:1px;height:20px;background:#c8c8c8;"></div>
<div class="r" style="left:1155px;top:640px;width:1px;height:20px;background:#c8c8c8;"></div>
<div class="r" style="left:1240px;top:640px;width:1px;height:20px;background:#c8c8c8;"></div>
<div class="r" style="left:1325px;top:640px;width:1px;height:20px;background:#c8c8c8;"></div>
<div class="r" style="left:1410px;top:640px;width:1px;height:20px;background:#c8c8c8;"></div>
<div class="r" style="left:1475px;top:640px;width:1px;height:20px;background:#c8c8c8;"></div>
<div class="r" style="left:662px;top:660px;width:814px;height:1px;background:#c8c8c8;"></div>
<div class="t" style="top:642.70px;font-size:12.4px;font-weight:400;color:#747474;line-height:16px;left:-1320px;width:2000px;text-align:right;">11</div>
<div class="t" style="top:642.70px;font-size:12.4px;font-weight:400;color:#747474;line-height:16px;left:764px;">Стадийность проектирования</div>
<div class="t" style="top:642.70px;font-size:12.4px;font-weight:400;color:#747474;line-height:16px;left:-761px;width:2000px;text-align:right;">0,4</div>
<div class="t" style="top:642.70px;font-size:12.4px;font-weight:400;color:#747474;line-height:16px;left:-676px;width:2000px;text-align:right;">0,6</div>
<div class="t" style="top:642.70px;font-size:12.4px;font-weight:400;color:#747474;line-height:16px;left:1413px;">Ки1</div>
<div class="r" style="left:662px;top:661px;width:814px;height:94px;background:#ffffff;"></div>
<div class="r" style="left:1476px;top:559px;width:21px;height:196px;background:#f0f0f0;"></div>
<svg class="r" style="left:1480px;top:564px" width="12" height="10" viewBox="0 0 12 10"><path d="M1.5 7.5 L6 3 L10.5 7.5" fill="none" stroke="#b8b8b8" stroke-width="1.6"/></svg>
</body></html>
